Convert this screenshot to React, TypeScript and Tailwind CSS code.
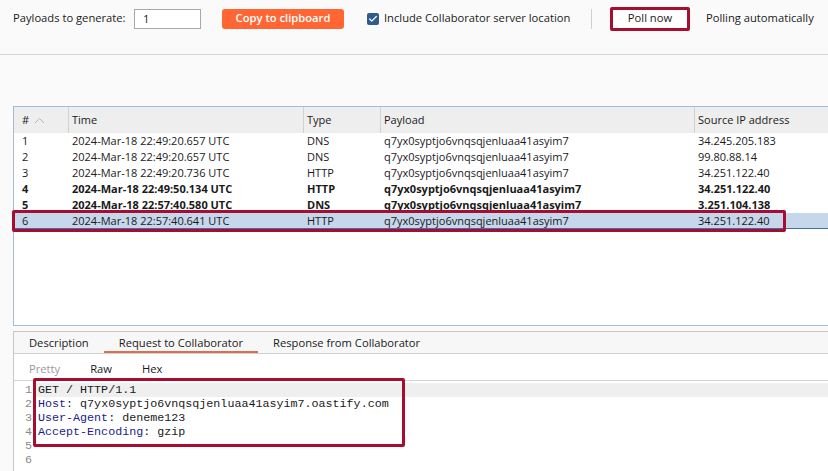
import { Check } from "lucide-react";

const payload = "q7yx0syptjo6vnqsqjenluaa41asyim7";

const rows = [
    { n: 1, time: "2024-Mar-18 22:49:20.657 UTC", type: "DNS", ip: "34.245.205.183", bold: false },
    { n: 2, time: "2024-Mar-18 22:49:20.657 UTC", type: "DNS", ip: "99.80.88.14", bold: false },
    { n: 3, time: "2024-Mar-18 22:49:20.736 UTC", type: "HTTP", ip: "34.251.122.40", bold: false },
    { n: 4, time: "2024-Mar-18 22:49:50.134 UTC", type: "HTTP", ip: "34.251.122.40", bold: true },
    { n: 5, time: "2024-Mar-18 22:57:40.580 UTC", type: "DNS", ip: "3.251.104.138", bold: true },
    { n: 6, time: "2024-Mar-18 22:57:40.641 UTC", type: "HTTP", ip: "34.251.122.40", bold: false },
];

const cols = "grid grid-cols-[54px_235px_77px_314px_1fr]";

function Toolbar() {
    return (
        <div className="h-[55px] border-b border-[#d6d6d6]">
            <div className="flex h-[37px] items-center text-[11.2px] text-[#1a1a1a]">
                <span className="ml-[13px] w-[111px] shrink-0 whitespace-nowrap">Payloads to generate:</span>
                <div className="ml-[10px] h-[20px] w-[67px] shrink-0 border border-[#a8a8a8] bg-white pl-[8px] leading-[18px]">1</div>
                <button className="ml-[21px] h-[20px] w-[122px] shrink-0 rounded-[3px] bg-[#ff6633] font-semibold text-white">
                    Copy to clipboard
                </button>
                <span className="ml-[23px] flex h-[12px] w-[12px] shrink-0 items-center justify-center rounded-[2px] bg-[#2f5b8f]">
                    <Check size={10} strokeWidth={3} color="white" />
                </span>
                <span className="ml-[5px] w-[184px] shrink-0 whitespace-nowrap">Include Collaborator server location</span>
                <span className="ml-[23px] h-[20px] w-px shrink-0 bg-[#d0d0d0]" />
                <button className="ml-[18px] h-[24px] w-[80px] shrink-0 rounded-[2px] border-[3px] border-[#a70d2e] bg-white">
                    Poll now
                </button>
                <span className="ml-[16px] whitespace-nowrap">Polling automatically</span>
            </div>
        </div>
    );
}

function InteractionsTable() {
    return (
        <div className="relative ml-[13px] h-[220px] border-l border-t border-b border-[#a3bcd8] bg-white text-[11px] text-[#1a1a1a]">
            <div className={`${cols} h-[26px] items-center bg-[#eeeeee]`}>
                <div className="flex h-full items-center pl-[8px]">
                    #
                    <svg width="11" height="7" viewBox="0 0 11 7" className="ml-[5px]">
                        <polyline points="1,6 5.5,1.5 10,6" fill="none" stroke="#b4b4b4" strokeWidth="1" />
                    </svg>
                </div>
                <div className="flex h-full items-center border-l border-[#d2d2d2] pl-[3px]">Time</div>
                <div className="flex h-full items-center border-l border-[#d2d2d2] pl-[3px]">Type</div>
                <div className="flex h-full items-center border-l border-[#d2d2d2] pl-[3px]">Payload</div>
                <div className="flex h-full items-center border-l border-[#d2d2d2] pl-[3px] whitespace-nowrap">Source IP address</div>
            </div>
            {rows.map((r) => (
                <div
                    key={r.n}
                    className={`${cols} h-[16px] leading-[16px] whitespace-nowrap ${r.bold ? "font-bold" : ""} ${
                        r.n === 6 ? "border-b border-[#3d6fa8] bg-[#c6d6eb] leading-[15px]" : ""
                    }`}
                >
                    <div className="pl-[8px]">{r.n}</div>
                    <div className="pl-[4px]">{r.time}</div>
                    <div className="pl-[4px]">{r.type}</div>
                    <div className="pl-[4px]">{payload}</div>
                    <div className="pl-[4px]">{r.ip}</div>
                </div>
            ))}
            {/* annotation around the selected row */}
            <div className="pointer-events-none absolute left-[-2px] top-[103px] h-[22px] w-[774px] rounded-[2px] border-[3px] border-[#a70d2e]" />
        </div>
    );
}

function RequestPanel() {
    const lines: { key?: string; rest: string }[] = [
        { rest: "GET / HTTP/1.1" },
        { key: "Host", rest: ": q7yx0syptjo6vnqsqjenluaa41asyim7.oastify.com" },
        { key: "User-Agent", rest: ": deneme123" },
        { key: "Accept-Encoding", rest: ": gzip" },
        { rest: "" },
        { rest: "" },
    ];

    return (
        <div className="ml-[13px] h-[140px] border-l border-t border-[#c6c6c6] bg-white text-[11.2px] text-[#1a1a1a]">
            <div className="flex h-[22px] border-b border-[#d0d0d0] bg-[#f7f7f7]">
                <div className="px-[15px] leading-[21px]">Description</div>
                <div className="border-b-2 border-[#d9714a] px-[15px] leading-[21px]">Request to Collaborator</div>
                <div className="px-[15px] leading-[21px]">Response from Collaborator</div>
            </div>
            <div className="flex h-[26px] items-center pt-[4px]">
                <div className="px-[15px] text-[#9a9a9a]">Pretty</div>
                <div className="px-[15px]">Raw</div>
                <div className="px-[15px]">Hex</div>
            </div>
            <div className="relative border-t border-[#d4d4d4] pt-[2px] [font-family:'Liberation_Mono',monospace] text-[11.7px]">
                {lines.map((l, i) => (
                    <div key={i} className="flex h-[14px] leading-[14px]">
                        <div className="w-[21px] shrink-0 pr-[3px] text-right text-[#8a8a8a]">{i + 1}</div>
                        <div className={`flex-1 whitespace-pre pl-[3px] ${i === 0 ? "bg-[#efefef]" : ""}`}>
                            {l.key && <span className="text-[#1c1c8a]">{l.key}</span>}
                            {l.rest}
                        </div>
                    </div>
                ))}
                {/* annotation around the raw request */}
                <div className="pointer-events-none absolute left-[19px] top-[-3px] h-[69px] w-[372px] rounded-[2px] border-[3px] border-[#a70d2e]" />
            </div>
        </div>
    );
}

export default function App() {
    return (
        <div className="h-[471px] w-[828px] overflow-hidden bg-[#fafafa] [font-family:'Open_Sans',sans-serif]">
            <Toolbar />
            <div className="h-[51px]" />
            <InteractionsTable />
            <div className="h-[5px]" />
            <RequestPanel />
        </div>
    );
}
